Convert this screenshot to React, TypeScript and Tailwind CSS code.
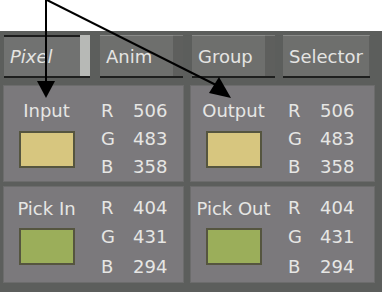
import React from "react";

const font = { fontFamily: '"DejaVu Sans", "Liberation Sans", sans-serif' };

type Panel = { label: string; swatch: string; r: number; g: number; b: number; top: boolean };

const panels: Panel[] = [
  { label: "Input", swatch: "bg-[#d7c67f]", r: 506, g: 483, b: 358, top: true },
  { label: "Output", swatch: "bg-[#d7c67f]", r: 506, g: 483, b: 358, top: true },
  { label: "Pick In", swatch: "bg-[#9bae5a]", r: 404, g: 431, b: 294, top: false },
  { label: "Pick Out", swatch: "bg-[#9bae5a]", r: 404, g: 431, b: 294, top: false },
];

const TabButton = ({ label, active, w }: { label: string; active?: boolean; w: string }) => (
  <div className={`flex h-[43px] ${w} border-b-2 border-[#1e1f1e]`}>
    <div
      className={`flex flex-1 items-center px-[6px] text-[18px] text-[#e4e4e2] ${
        active ? "bg-[#717271] border-t-2 border-[#1c1c1c] italic" : "bg-[#6e6f6d] border-t border-[#8a8b89]"
      }`}
    >
      {label}
    </div>
    <div className={active ? "w-[10px] bg-[#b7b9b6]" : "w-[10px] bg-[#5e5f5d] border-t border-[#7d7e7c]"} />
  </div>
);

const ColorPanel = ({ p }: { p: Panel }) => (
  <div className={`flex bg-[#7b797c] border border-[#6c6c6c] ${p.top ? "pt-[11px]" : "pt-[7px]"}`}>
    <div className="flex w-[85px] flex-col items-center">
      <div className={`h-[27px] text-[18px] leading-[27px] text-[#e6e6e4] ${p.top ? "" : "mt-[1px]"}`}>{p.label}</div>
      <div className={`h-[37px] w-[56px] border-2 border-[#55553f] ${p.top ? "mt-[7px]" : "mt-[6px]"} ${p.swatch}`} />
    </div>
    <div className="ml-[12px] grid grid-cols-[32px_40px] text-[18px] leading-[27.5px] text-[#e6e6e4]">
      <span>R</span>
      <span>{p.r}</span>
      <span>G</span>
      <span>{p.g}</span>
      <span>B</span>
      <span>{p.b}</span>
    </div>
  </div>
);

export default function App() {
  return (
    <div className="relative h-[292px] w-[382px] overflow-hidden bg-white" style={font}>
      <div className="h-[31px]" />
      <div className="h-[261px] bg-[#5c5e5c] pl-[3px] pr-[6px] pt-[4px]">
        <div className="flex h-[45px] items-start">
          <div className="ml-[1px] flex gap-[10px]">
            <TabButton label="Pixel" active w="w-[86px]" />
            <TabButton label="Anim" w="w-[83px]" />
          </div>
          <div className="ml-[9px] flex gap-[8px]">
            <TabButton label="Group" w="w-[83px]" />
            <TabButton label="Selector" w="w-[87px]" />
          </div>
        </div>
        <div className="mt-[5px] grid grid-cols-[181px_185px] grid-rows-[97px_97px] gap-x-[6px] gap-y-[4px]">
          {panels.map((p) => (
            <ColorPanel key={p.label} p={p} />
          ))}
        </div>
      </div>
      <svg className="absolute left-0 top-0" width="382" height="292">
        <line x1="46" y1="0" x2="46" y2="84" stroke="#000" strokeWidth="2" />
        <polygon points="37,81 55,81 46,98" fill="#000" />
        <line x1="47" y1="0" x2="218" y2="86" stroke="#000" strokeWidth="2" />
        <polygon points="209,93 219,77 231,98" fill="#000" />
      </svg>
    </div>
  );
}
